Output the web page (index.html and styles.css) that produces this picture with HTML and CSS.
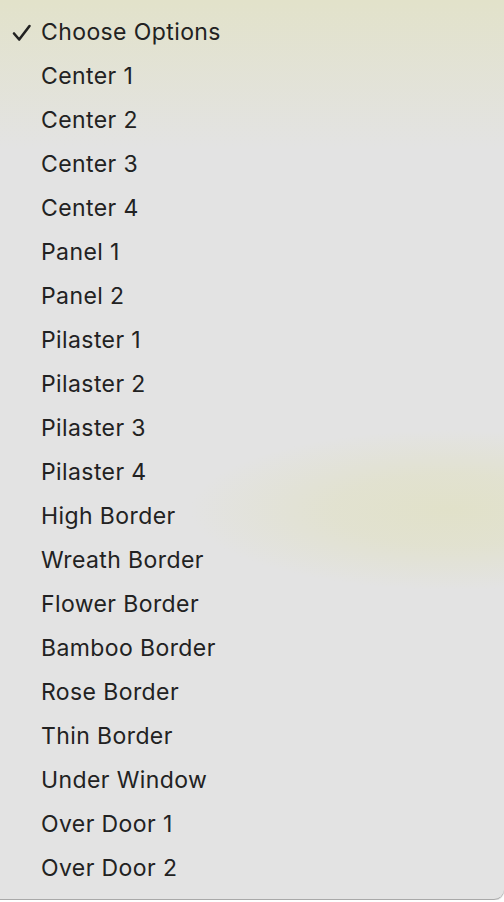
FILE: index.html
```html
<!DOCTYPE html>
<html lang="en">
<head>
    <meta charset="UTF-8">
    <meta name="viewport" content="width=device-width, initial-scale=1.0">
    <title>Choose Options</title>
    <link rel="stylesheet" href="styles.css">
</head>
<body>
    <!-- Popup menu -->
    <div class="menu">
        <ul class="menu-list">
            <li class="menu-item checked">
                <span class="check">
                    <svg width="20" height="18" viewBox="0 0 20 18">
                        <path d="M2 9.5 L7.2 15.5 L17.5 2" fill="none" stroke="#222" stroke-width="2.6" stroke-linecap="round" stroke-linejoin="round"/>
                    </svg>
                </span>
                Choose Options
            </li>
            <li class="menu-item"><span class="check"></span>Center 1</li>
            <li class="menu-item"><span class="check"></span>Center 2</li>
            <li class="menu-item"><span class="check"></span>Center 3</li>
            <li class="menu-item"><span class="check"></span>Center 4</li>
            <li class="menu-item"><span class="check"></span>Panel 1</li>
            <li class="menu-item"><span class="check"></span>Panel 2</li>
            <li class="menu-item"><span class="check"></span>Pilaster 1</li>
            <li class="menu-item"><span class="check"></span>Pilaster 2</li>
            <li class="menu-item"><span class="check"></span>Pilaster 3</li>
            <li class="menu-item"><span class="check"></span>Pilaster 4</li>
            <li class="menu-item"><span class="check"></span>High Border</li>
            <li class="menu-item"><span class="check"></span>Wreath Border</li>
            <li class="menu-item"><span class="check"></span>Flower Border</li>
            <li class="menu-item"><span class="check"></span>Bamboo Border</li>
            <li class="menu-item"><span class="check"></span>Rose Border</li>
            <li class="menu-item"><span class="check"></span>Thin Border</li>
            <li class="menu-item"><span class="check"></span>Under Window</li>
            <li class="menu-item"><span class="check"></span>Over Door 1</li>
            <li class="menu-item"><span class="check"></span>Over Door 2</li>
        </ul>
    </div>
</body>
</html>
```

FILE: styles.css
```css
/* Global */
body {
    margin: 0;
    padding: 0;
    background-color: #ffffff;
    font-family: Inter, "Noto Sans", sans-serif;
    color: #222;
}

/* Menu panel */
.menu {
    height: 900px;
    box-sizing: border-box;
    border-bottom: 1px solid #a9a9a9;
    border-bottom-right-radius: 10px;
    box-shadow: 0 1px 1px rgba(0, 0, 0, 0.15);
    background-color: #e3e3e3;
    background-image:
        radial-gradient(ellipse 260px 80px at 450px 510px, rgba(225, 225, 200, 0.95) 0%, rgba(225, 225, 200, 0.7) 45%, rgba(225, 225, 200, 0) 100%),
        linear-gradient(to bottom, #e2e2ca 0px, #e3e3e3 150px);
    overflow: hidden;
}

.menu-list {
    list-style: none;
    margin: 0;
    padding: 10px 0 0 0;
}

.menu-item {
    display: flex;
    align-items: center;
    height: 44px;
    font-size: 23px;
    letter-spacing: 0.4px;
}

.check {
    width: 41px;
    flex-shrink: 0;
    display: flex;
    justify-content: flex-end;
    padding-right: 9px;
    box-sizing: border-box;
}

.check svg {
    display: block;
    margin-top: 2px;
}
```
